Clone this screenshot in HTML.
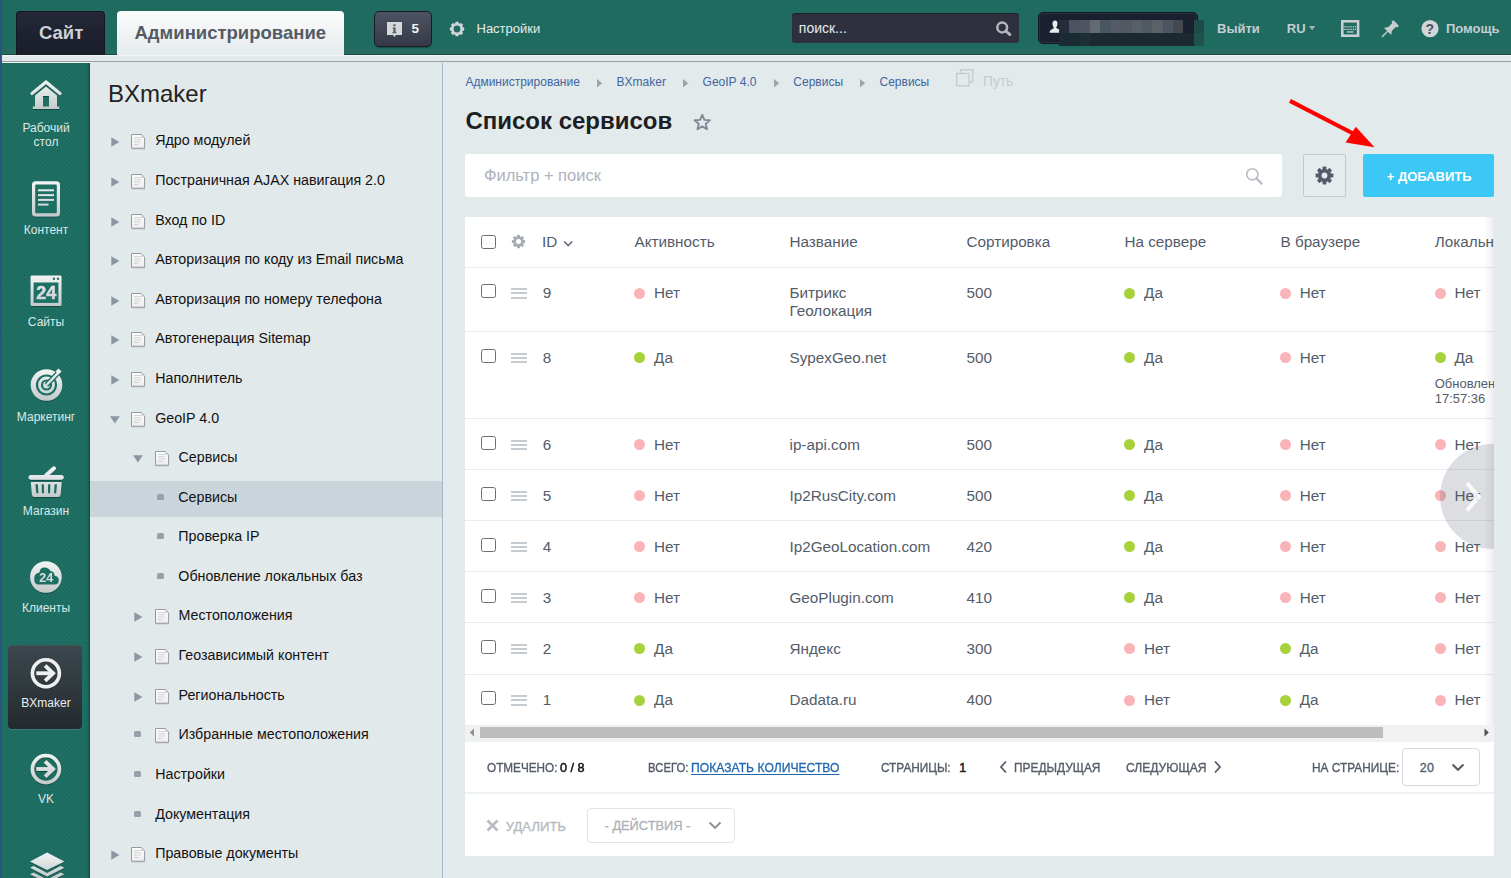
<!DOCTYPE html>
<html><head><meta charset="utf-8"><style>
*{box-sizing:border-box;margin:0;padding:0}
html,body{width:1511px;height:878px;overflow:hidden;font-family:"Liberation Sans",sans-serif;background:#e3eaec;position:relative}
.a{position:absolute}
.t{position:absolute;white-space:nowrap}
svg{position:absolute;overflow:visible}
</style></head><body>
<div class="a" style="left:0px;top:0px;width:1511px;height:55px;background:#1f6b5f"></div>
<div class="a" style="left:2px;top:49px;width:1509px;height:5px;background:#276a5f"></div>
<div class="a" style="left:2px;top:54px;width:1509px;height:1px;background:#184b43"></div>
<div class="a" style="left:16.2px;top:11px;width:88.6px;height:44px;background:linear-gradient(#232737,#1a1e2a);border-radius:4px 4px 0 0;border:1px solid #151821;border-bottom:none"></div>
<div class="t " style="left:39px;top:23.64px;font-size:18.5px;line-height:18.5px;color:#ccd1d6;font-weight:700;">Сайт</div>
<div class="a" style="left:117px;top:11px;width:227px;height:45px;background:linear-gradient(#fbfcfc,#e5eaec);border-radius:4px 4px 0 0"></div>
<div class="t " style="left:134.5px;top:23.64px;font-size:18.5px;line-height:18.5px;color:#555b65;font-weight:700;">Администрирование</div>
<div class="a" style="left:374px;top:11px;width:58px;height:36px;background:linear-gradient(#4e5364,#353947);border-radius:5px;border:1px solid #1a1c24;box-shadow:0 1px 1px rgba(0,0,0,.25)"></div>
<svg style="left:387px;top:22px" width="16" height="16" viewBox="0 0 16 16"><path d="M0 0H15V13H9L7.5 15L6 13H0Z" fill="#d5d9dc"/><rect x="6.3" y="2.3" width="2.2" height="2" fill="#5a5e66"/><path d="M5.5 5.5H8.6V10.2H9.6V11.2H5.3V10.2H6.3V6.5H5.5Z" fill="#5a5e66"/></svg>
<div class="t " style="left:411.5px;top:21.67px;font-size:13.5px;line-height:13.5px;color:#f2f4f5;font-weight:700;">5</div>
<svg style="left:449px;top:21px" width="16" height="16" viewBox="0 0 16 16"><g fill="#cfd6d8"><circle cx="8" cy="8" r="6"/><g><rect x="6.3" y="0.8" width="3.4" height="2.8" rx=".7"/><rect x="6.3" y="12.4" width="3.4" height="2.8" rx=".7"/></g><g transform="rotate(45 8 8)"><rect x="6.3" y="0.8" width="3.4" height="2.8" rx=".7"/><rect x="6.3" y="12.4" width="3.4" height="2.8" rx=".7"/></g><g transform="rotate(90 8 8)"><rect x="6.3" y="0.8" width="3.4" height="2.8" rx=".7"/><rect x="6.3" y="12.4" width="3.4" height="2.8" rx=".7"/></g><g transform="rotate(135 8 8)"><rect x="6.3" y="0.8" width="3.4" height="2.8" rx=".7"/><rect x="6.3" y="12.4" width="3.4" height="2.8" rx=".7"/></g></g><circle cx="8" cy="8" r="3.4" fill="#1f6b5f"/></svg>
<div class="t " style="left:476.5px;top:22.40px;font-size:13px;line-height:13px;color:#e6ebec;">Настройки</div>
<div class="a" style="left:792px;top:13px;width:227px;height:30px;background:#2e313d;border-radius:3px;box-shadow:inset 0 1px 1px rgba(0,0,0,.35)"></div>
<div class="t " style="left:798.8px;top:21.15px;font-size:14px;line-height:14px;color:#e9eced;">поиск...</div>
<svg style="left:994px;top:20px" width="18" height="16" viewBox="0 0 18 16"><circle cx="8.2" cy="7.5" r="4.9" fill="none" stroke="#b3b8bc" stroke-width="2.5"/><path d="M11.8 11L15.9 14.6" stroke="#b3b8bc" stroke-width="2.8" stroke-linecap="round"/></svg>
<div class="a" style="left:1038.2px;top:12.3px;width:159.5px;height:31.4px;background:#1b2030;border-radius:5px;border:1px solid #141720;box-shadow:inset 0 0 0 1px #293042"></div>
<svg style="left:1049px;top:20px" width="12" height="14" viewBox="0 0 12 14"><path d="M6 0.5C4.2 0.5 3.4 2 3.5 3.8C3.6 5.6 4.3 7 4.8 7.6C4.7 8.3 4.3 8.8 3.2 9.3C1.6 10 0.6 10.6 0.6 12.8H10.5V9.6C9.7 9.2 9 9 8.1 8.6C7.5 8.3 7.3 7.9 7.2 7.5C7.8 6.8 8.4 5.4 8.5 3.8C8.6 2 7.8 0.5 6 0.5Z" fill="#e7ebec"/></svg>
<div class="a" style="left:1059px;top:20px;width:10.3px;height:13px;background:#262c3a"></div>
<div class="a" style="left:1059px;top:33px;width:10.3px;height:13px;background:#1a2b32"></div>
<div class="a" style="left:1069px;top:20px;width:11.3px;height:13px;background:#4a535f"></div>
<div class="a" style="left:1069px;top:33px;width:11.3px;height:13px;background:#1b2b32"></div>
<div class="a" style="left:1080px;top:20px;width:10.3px;height:13px;background:#4e5460"></div>
<div class="a" style="left:1080px;top:33px;width:10.3px;height:13px;background:#1e3035"></div>
<div class="a" style="left:1090px;top:20px;width:10.3px;height:13px;background:#646a72"></div>
<div class="a" style="left:1090px;top:33px;width:10.3px;height:13px;background:#1b2a31"></div>
<div class="a" style="left:1100px;top:20px;width:11.3px;height:13px;background:#4a5562"></div>
<div class="a" style="left:1100px;top:33px;width:11.3px;height:13px;background:#1b2a31"></div>
<div class="a" style="left:1111px;top:20px;width:10.3px;height:13px;background:#555b65"></div>
<div class="a" style="left:1111px;top:33px;width:10.3px;height:13px;background:#1b2a31"></div>
<div class="a" style="left:1121px;top:20px;width:10.8px;height:13px;background:#535963"></div>
<div class="a" style="left:1121px;top:33px;width:10.8px;height:13px;background:#1b2a31"></div>
<div class="a" style="left:1131.5px;top:20px;width:10.39999999999991px;height:13px;background:#56606a"></div>
<div class="a" style="left:1131.5px;top:33px;width:10.39999999999991px;height:13px;background:#1b2a31"></div>
<div class="a" style="left:1141.6px;top:20px;width:10.900000000000137px;height:13px;background:#525862"></div>
<div class="a" style="left:1141.6px;top:33px;width:10.900000000000137px;height:13px;background:#1b2a31"></div>
<div class="a" style="left:1152.2px;top:20px;width:10.89999999999991px;height:13px;background:#5b6168"></div>
<div class="a" style="left:1152.2px;top:33px;width:10.89999999999991px;height:13px;background:#1b2a31"></div>
<div class="a" style="left:1162.8px;top:20px;width:10.3px;height:13px;background:#4c5663"></div>
<div class="a" style="left:1162.8px;top:33px;width:10.3px;height:13px;background:#1b2a31"></div>
<div class="a" style="left:1172.8px;top:20px;width:10.400000000000137px;height:13px;background:#45484f"></div>
<div class="a" style="left:1172.8px;top:33px;width:10.400000000000137px;height:13px;background:#1b2a31"></div>
<div class="a" style="left:1182.9px;top:20px;width:11.39999999999991px;height:13px;background:#1b2030"></div>
<div class="a" style="left:1182.9px;top:33px;width:11.39999999999991px;height:13px;background:#1b2a31"></div>
<div class="a" style="left:1194px;top:20px;width:10.000000000000046px;height:13px;background:#1f4a47"></div>
<div class="a" style="left:1194px;top:33px;width:10.000000000000046px;height:13px;background:#1f5249"></div>
<div class="t " style="left:1217px;top:22.40px;font-size:13px;line-height:13px;color:#c3ced1;font-weight:700;">Выйти</div>
<div class="t " style="left:1286.8px;top:22.10px;font-size:13px;line-height:13px;color:#c3ced1;font-weight:700;">RU</div>
<svg style="left:1309px;top:26px" width="7" height="5" viewBox="0 0 7 5"><path d="M0 0H6.2L3.1 4.3Z" fill="#a9b4b8"/></svg>
<svg style="left:1341px;top:20px" width="19" height="18" viewBox="0 0 19 18"><rect x="1.3" y="1.3" width="15.8" height="14.4" fill="none" stroke="#c8ced1" stroke-width="2.6"/><g fill="#c8ced1"><rect x="3.2" y="6.2" width="1.4" height="1.2"/><rect x="5.3" y="6.2" width="1.4" height="1.2"/><rect x="7.4" y="6.2" width="1.4" height="1.2"/><rect x="9.5" y="6.2" width="1.4" height="1.2"/><rect x="11.6" y="6.2" width="1.4" height="1.2"/><rect x="13.7" y="6.2" width="1.4" height="1.2"/><rect x="3.2" y="8.8" width="1.4" height="1.2"/><rect x="5.3" y="8.8" width="1.4" height="1.2"/><rect x="7.4" y="8.8" width="1.4" height="1.2"/><rect x="9.5" y="8.8" width="1.4" height="1.2"/><rect x="11.6" y="8.8" width="1.4" height="1.2"/><rect x="13.7" y="8.8" width="1.4" height="1.2"/><rect x="6" y="11.3" width="6.5" height="1.3"/></g></svg>
<svg style="left:1378.7px;top:19.8px" width="20" height="20" viewBox="0 0 20 20"><g transform="rotate(45 10 10)" fill="#c8ced1"><rect x="5.8" y="0" width="8.4" height="2.8" rx="1.2"/><rect x="7.4" y="2.4" width="5.2" height="6.6"/><path d="M7.4 8.6H12.6L15.2 12H4.8Z"/><rect x="9.35" y="11.5" width="1.3" height="8.5"/></g></svg>
<svg style="left:1421px;top:20px" width="18" height="18" viewBox="0 0 18 18"><circle cx="9" cy="8.6" r="8.6" fill="#d0d6d8"/></svg>
<div class="t " style="left:1425.6px;top:21.55px;font-size:14px;line-height:14px;color:#4b505a;font-weight:700;">?</div>
<div class="t " style="left:1446px;top:22.40px;font-size:13px;line-height:13px;color:#c3ced1;font-weight:700;">Помощь</div>
<div class="a" style="left:2px;top:55px;width:1509px;height:8px;background:#e2e9eb"></div>
<div class="a" style="left:2px;top:55px;width:1509px;height:1px;background:#f3f6f7"></div>
<div class="a" style="left:2px;top:61px;width:1509px;height:1px;background:#9a9fa2"></div>
<div class="a" style="left:2px;top:62px;width:88px;height:1px;background:#f2f5f6"></div>
<div class="a" style="left:0px;top:0px;width:2px;height:878px;background:#2b5480"></div>
<div class="a" style="left:2px;top:63px;width:88px;height:815px;background:#1f7064"></div>
<div class="a" style="left:2px;top:63px;width:88px;height:815px;background-image:radial-gradient(circle at 1.1px 1.1px,rgba(0,40,30,.13) 0.7px,transparent 1.1px),radial-gradient(circle at 3.3px 3.3px,rgba(0,40,30,.13) 0.7px,transparent 1.1px);background-size:4.4px 4.4px"></div>
<div class="a" style="left:86px;top:63px;width:3px;height:815px;background:linear-gradient(90deg,rgba(0,0,0,0),rgba(0,0,0,.15))"></div>
<div class="a" style="left:89px;top:63px;width:1px;height:815px;background:#0f5046"></div>
<svg style="left:0;top:0" width="90" height="878" viewBox="0 0 90 878"><defs><linearGradient id="gh" gradientUnits="userSpaceOnUse" x1="0" y1="80" x2="0" y2="110"><stop offset="0" stop-color="#f3f5f5"/><stop offset="1" stop-color="#c3c9ca"/></linearGradient></defs><defs><linearGradient id="gc" gradientUnits="userSpaceOnUse" x1="0" y1="181" x2="0" y2="217"><stop offset="0" stop-color="#f3f5f5"/><stop offset="1" stop-color="#c3c9ca"/></linearGradient></defs><defs><linearGradient id="gs" gradientUnits="userSpaceOnUse" x1="0" y1="275" x2="0" y2="306"><stop offset="0" stop-color="#f3f5f5"/><stop offset="1" stop-color="#c3c9ca"/></linearGradient></defs><defs><linearGradient id="gt" gradientUnits="userSpaceOnUse" x1="0" y1="369" x2="0" y2="401"><stop offset="0" stop-color="#f3f5f5"/><stop offset="1" stop-color="#c3c9ca"/></linearGradient></defs><defs><linearGradient id="gb" gradientUnits="userSpaceOnUse" x1="0" y1="467" x2="0" y2="498"><stop offset="0" stop-color="#f3f5f5"/><stop offset="1" stop-color="#c3c9ca"/></linearGradient></defs><defs><linearGradient id="gk" gradientUnits="userSpaceOnUse" x1="0" y1="561" x2="0" y2="593"><stop offset="0" stop-color="#f3f5f5"/><stop offset="1" stop-color="#c3c9ca"/></linearGradient></defs><defs><linearGradient id="gv" gradientUnits="userSpaceOnUse" x1="0" y1="753" x2="0" y2="785"><stop offset="0" stop-color="#f3f5f5"/><stop offset="1" stop-color="#c3c9ca"/></linearGradient></defs><defs><linearGradient id="gl" gradientUnits="userSpaceOnUse" x1="0" y1="852" x2="0" y2="878"><stop offset="0" stop-color="#f3f5f5"/><stop offset="1" stop-color="#c3c9ca"/></linearGradient></defs><defs><filter id="sh" x="-20%" y="-20%" width="140%" height="140%"><feDropShadow dx="0" dy="1" stdDeviation="0.6" flood-color="#000" flood-opacity="0.35"/></filter></defs><g filter="url(#sh)"><path d="M32 93.5L46 82L60 93.5" fill="none" stroke="url(#gh)" stroke-width="3.2" stroke-linecap="round" stroke-linejoin="round"/><path d="M35 95.5L46 86.5L57 95.5V106.5H59.2V109H32.8V106.5H35Z M43 96V106.5H49V96Z" fill="url(#gh)" fill-rule="evenodd"/></g><g filter="url(#sh)"><rect x="32" y="181.2" width="28" height="35.3" rx="3.5" fill="url(#gc)"/><rect x="35.2" y="184.4" width="21.6" height="28.9" rx="1" fill="#1e6f63"/><g fill="url(#gc)"><rect x="38" y="189.3" width="16" height="2"/><rect x="38" y="194.1" width="16" height="2"/><rect x="38" y="198.9" width="16" height="2"/><rect x="38" y="203.6" width="10.5" height="2"/></g></g><g filter="url(#sh)"><rect x="30.6" y="275.5" width="30.9" height="30.5" rx="1.3" fill="url(#gs)"/><rect x="33.6" y="282.5" width="24.8" height="20.4" fill="#1e6f63"/><circle cx="53.9" cy="278.8" r="1.2" fill="#2f6a61"/><circle cx="58" cy="278.8" r="1.2" fill="#2f6a61"/><text x="46.2" y="299.4" text-anchor="middle" font-family="Liberation Sans" font-weight="700" font-size="18" fill="url(#gs)" stroke="url(#gs)" stroke-width="0.5">24</text></g><g filter="url(#sh)"><circle cx="46.5" cy="385" r="15.8" fill="url(#gt)"/><circle cx="46.5" cy="385" r="10.6" fill="#1e6f63"/><circle cx="46.5" cy="385" r="8.4" fill="url(#gt)"/><circle cx="46.5" cy="385" r="5.6" fill="#1e6f63"/><circle cx="46.5" cy="385" r="3.4" fill="url(#gt)"/><path d="M46.5 385L58.5 372.5" stroke="#1e6f63" stroke-width="5"/><path d="M46.5 385L59 372" stroke="url(#gt)" stroke-width="2.4"/><path d="M55.5 371.5L58.5 368.5L61.5 371.5L58.5 374.5Z" fill="url(#gt)"/></g><g filter="url(#sh)"><path d="M46 475.5L54 468.3" stroke="url(#gb)" stroke-width="4" stroke-linecap="round"/><rect x="28.5" y="474.9" width="35.3" height="4.8" rx="2.4" fill="url(#gb)"/><path d="M30.8 482H61.7L60.6 494.5Q60.3 497 57.8 497H34.7Q32.2 497 31.9 494.5Z M35.3 484.3L36.3 493.3H38.5L37.9 484.3Z M41.6 484.3L41.9 493.3H44.1L43.9 484.3Z M48.1 484.3L47.9 493.3H50.1L50.4 484.3Z M54.6 484.3L54 493.3H56.2L57 484.3Z" fill="url(#gb)" fill-rule="evenodd"/></g><g filter="url(#sh)"><circle cx="45.9" cy="577" r="15.8" fill="url(#gk)"/><path d="M37.8 584.4H54.8Q58.8 584.4 58.8 580.2Q58.8 576.2 54.6 575.8Q54.6 571.4 50.4 571Q48.6 567.4 44.6 567.4Q39.8 567.4 39.4 572.6Q34.2 573.6 34.2 578.8Q34.2 584.4 37.8 584.4Z" fill="#1e6f63"/><text x="46.3" y="581.6" text-anchor="middle" font-family="Liberation Sans" font-weight="700" font-size="12.6" fill="url(#gk)">24</text></g></svg>
<div class="a" style="left:8px;top:645px;width:74px;height:84px;background:linear-gradient(#3c484e,#242a2f);border-radius:4px;box-shadow:0 1px 0 rgba(255,255,255,.12), inset 0 1px 0 rgba(255,255,255,.06)"></div>
<svg style="left:0;top:0" width="90" height="878" viewBox="0 0 90 878"><defs><linearGradient id="gv2" gradientUnits="userSpaceOnUse" x1="0" y1="753" x2="0" y2="785"><stop offset="0" stop-color="#f3f5f5"/><stop offset="1" stop-color="#c3c9ca"/></linearGradient></defs><defs><linearGradient id="gl2" gradientUnits="userSpaceOnUse" x1="0" y1="852" x2="0" y2="878"><stop offset="0" stop-color="#f3f5f5"/><stop offset="1" stop-color="#c3c9ca"/></linearGradient></defs><defs><filter id="sh2" x="-20%" y="-20%" width="140%" height="140%"><feDropShadow dx="0" dy="1" stdDeviation="0.6" flood-color="#000" flood-opacity="0.35"/></filter></defs><g filter="url(#sh2)"><circle cx="45.9" cy="673.2" r="13.5" fill="none" stroke="#eef0f0" stroke-width="3.6"/><path d="M36.3 673.2H51.9" stroke="#eef0f0" stroke-width="3.8"/><path d="M45.1 665.6L53.1 673.2L45.1 680.8000000000001" fill="none" stroke="#eef0f0" stroke-width="3.8" stroke-linejoin="miter"/></g><g filter="url(#sh2)"><circle cx="45.9" cy="769" r="13.5" fill="none" stroke="url(#gv2)" stroke-width="3.6"/><path d="M36.3 769H51.9" stroke="url(#gv2)" stroke-width="3.8"/><path d="M45.1 761.4L53.1 769L45.1 776.6" fill="none" stroke="url(#gv2)" stroke-width="3.8" stroke-linejoin="miter"/></g><g filter="url(#sh2)" fill="url(#gl2)"><path d="M30 861.4L47.1 852.4L64.3 861.4L47.1 870Z"/><path d="M30 867.8L33.6 866L47.1 873L60.6 866L64.3 867.8L47.1 876.4Z"/><path d="M30 874.2L33.6 872.4L47.1 879.4L60.6 872.4L64.3 874.2L47.1 882.8Z"/></g></svg>
<div class="t" style="left:2px;width:88px;text-align:center;top:121.84px;font-size:12px;line-height:12px;color:#dde8e7">Рабочий</div>
<div class="t" style="left:2px;width:88px;text-align:center;top:135.64px;font-size:12px;line-height:12px;color:#dde8e7">стол</div>
<div class="t" style="left:2px;width:88px;text-align:center;top:224.34px;font-size:12px;line-height:12px;color:#dde8e7">Контент</div>
<div class="t" style="left:2px;width:88px;text-align:center;top:315.64px;font-size:12px;line-height:12px;color:#dde8e7">Сайты</div>
<div class="t" style="left:2px;width:88px;text-align:center;top:410.54px;font-size:12px;line-height:12px;color:#dde8e7">Маркетинг</div>
<div class="t" style="left:2px;width:88px;text-align:center;top:505.44px;font-size:12px;line-height:12px;color:#dde8e7">Магазин</div>
<div class="t" style="left:2px;width:88px;text-align:center;top:601.54px;font-size:12px;line-height:12px;color:#dde8e7">Клиенты</div>
<div class="t" style="left:2px;width:88px;text-align:center;top:696.84px;font-size:12px;line-height:12px;color:#e8eef0">BXmaker</div>
<div class="t" style="left:2px;width:88px;text-align:center;top:793.24px;font-size:12px;line-height:12px;color:#dde8e7">VK</div>
<div class="a" style="left:90px;top:63px;width:352px;height:815px;background:#e2e9eb"></div>
<div class="a" style="left:442px;top:63px;width:1px;height:815px;background:#a3b5c6"></div>
<div class="t " style="left:108px;top:81.98px;font-size:24px;line-height:24px;color:#222;">BXmaker</div>
<div class="a" style="left:90px;top:481px;width:352px;height:36px;background:#cad5db"></div>
<svg style="left:110.8px;top:137.0px" width="9" height="10" viewBox="0 0 9 10"><path d="M0.3 0.3L8.4 5L0.3 9.7Z" fill="#8b96a3"/></svg>
<svg style="left:130.9px;top:134.1px" width="16" height="17" viewBox="0 0 16 17"><defs><linearGradient id="pgf" x1="0" y1="0" x2="0" y2="1"><stop offset="0" stop-color="#fdfdfd"/><stop offset="1" stop-color="#eeeeee"/></linearGradient></defs><rect x="0.6" y="14" width="13.2" height="1.4" fill="rgba(0,0,0,.16)"/><path d="M0.5 0.5H10.2L13.6 3.9V14.2H0.5Z" fill="url(#pgf)" stroke="#979a9d" stroke-width="1"/><path d="M10.2 0.9V3.9H13.3Z" fill="#d0d2d4"/><g fill="#c9cbcd"><rect x="3" y="3.2" width="6.8" height="0.8"/><rect x="3" y="5.4" width="7" height="0.8"/><rect x="3" y="7.6" width="7" height="0.8"/><rect x="3" y="10.2" width="4.5" height="0.8"/></g></svg>
<div class="t " style="left:155.2px;top:132.94px;font-size:14.25px;line-height:14.25px;color:#121212;">Ядро модулей</div>
<svg style="left:110.8px;top:177.0px" width="9" height="10" viewBox="0 0 9 10"><path d="M0.3 0.3L8.4 5L0.3 9.7Z" fill="#8b96a3"/></svg>
<svg style="left:130.9px;top:174.1px" width="16" height="17" viewBox="0 0 16 17"><defs><linearGradient id="pgf" x1="0" y1="0" x2="0" y2="1"><stop offset="0" stop-color="#fdfdfd"/><stop offset="1" stop-color="#eeeeee"/></linearGradient></defs><rect x="0.6" y="14" width="13.2" height="1.4" fill="rgba(0,0,0,.16)"/><path d="M0.5 0.5H10.2L13.6 3.9V14.2H0.5Z" fill="url(#pgf)" stroke="#979a9d" stroke-width="1"/><path d="M10.2 0.9V3.9H13.3Z" fill="#d0d2d4"/><g fill="#c9cbcd"><rect x="3" y="3.2" width="6.8" height="0.8"/><rect x="3" y="5.4" width="7" height="0.8"/><rect x="3" y="7.6" width="7" height="0.8"/><rect x="3" y="10.2" width="4.5" height="0.8"/></g></svg>
<div class="t " style="left:155.2px;top:172.94px;font-size:14.25px;line-height:14.25px;color:#121212;">Постраничная AJAX навигация 2.0</div>
<svg style="left:110.8px;top:217.0px" width="9" height="10" viewBox="0 0 9 10"><path d="M0.3 0.3L8.4 5L0.3 9.7Z" fill="#8b96a3"/></svg>
<svg style="left:130.9px;top:214.1px" width="16" height="17" viewBox="0 0 16 17"><defs><linearGradient id="pgf" x1="0" y1="0" x2="0" y2="1"><stop offset="0" stop-color="#fdfdfd"/><stop offset="1" stop-color="#eeeeee"/></linearGradient></defs><rect x="0.6" y="14" width="13.2" height="1.4" fill="rgba(0,0,0,.16)"/><path d="M0.5 0.5H10.2L13.6 3.9V14.2H0.5Z" fill="url(#pgf)" stroke="#979a9d" stroke-width="1"/><path d="M10.2 0.9V3.9H13.3Z" fill="#d0d2d4"/><g fill="#c9cbcd"><rect x="3" y="3.2" width="6.8" height="0.8"/><rect x="3" y="5.4" width="7" height="0.8"/><rect x="3" y="7.6" width="7" height="0.8"/><rect x="3" y="10.2" width="4.5" height="0.8"/></g></svg>
<div class="t " style="left:155.2px;top:212.94px;font-size:14.25px;line-height:14.25px;color:#121212;">Вход по ID</div>
<svg style="left:110.8px;top:256.0px" width="9" height="10" viewBox="0 0 9 10"><path d="M0.3 0.3L8.4 5L0.3 9.7Z" fill="#8b96a3"/></svg>
<svg style="left:130.9px;top:253.1px" width="16" height="17" viewBox="0 0 16 17"><defs><linearGradient id="pgf" x1="0" y1="0" x2="0" y2="1"><stop offset="0" stop-color="#fdfdfd"/><stop offset="1" stop-color="#eeeeee"/></linearGradient></defs><rect x="0.6" y="14" width="13.2" height="1.4" fill="rgba(0,0,0,.16)"/><path d="M0.5 0.5H10.2L13.6 3.9V14.2H0.5Z" fill="url(#pgf)" stroke="#979a9d" stroke-width="1"/><path d="M10.2 0.9V3.9H13.3Z" fill="#d0d2d4"/><g fill="#c9cbcd"><rect x="3" y="3.2" width="6.8" height="0.8"/><rect x="3" y="5.4" width="7" height="0.8"/><rect x="3" y="7.6" width="7" height="0.8"/><rect x="3" y="10.2" width="4.5" height="0.8"/></g></svg>
<div class="t " style="left:155.2px;top:251.94px;font-size:14.25px;line-height:14.25px;color:#121212;">Авторизация по коду из Email письма</div>
<svg style="left:110.8px;top:296.0px" width="9" height="10" viewBox="0 0 9 10"><path d="M0.3 0.3L8.4 5L0.3 9.7Z" fill="#8b96a3"/></svg>
<svg style="left:130.9px;top:293.1px" width="16" height="17" viewBox="0 0 16 17"><defs><linearGradient id="pgf" x1="0" y1="0" x2="0" y2="1"><stop offset="0" stop-color="#fdfdfd"/><stop offset="1" stop-color="#eeeeee"/></linearGradient></defs><rect x="0.6" y="14" width="13.2" height="1.4" fill="rgba(0,0,0,.16)"/><path d="M0.5 0.5H10.2L13.6 3.9V14.2H0.5Z" fill="url(#pgf)" stroke="#979a9d" stroke-width="1"/><path d="M10.2 0.9V3.9H13.3Z" fill="#d0d2d4"/><g fill="#c9cbcd"><rect x="3" y="3.2" width="6.8" height="0.8"/><rect x="3" y="5.4" width="7" height="0.8"/><rect x="3" y="7.6" width="7" height="0.8"/><rect x="3" y="10.2" width="4.5" height="0.8"/></g></svg>
<div class="t " style="left:155.2px;top:291.94px;font-size:14.25px;line-height:14.25px;color:#121212;">Авторизация по номеру телефона</div>
<svg style="left:110.8px;top:335.0px" width="9" height="10" viewBox="0 0 9 10"><path d="M0.3 0.3L8.4 5L0.3 9.7Z" fill="#8b96a3"/></svg>
<svg style="left:130.9px;top:332.1px" width="16" height="17" viewBox="0 0 16 17"><defs><linearGradient id="pgf" x1="0" y1="0" x2="0" y2="1"><stop offset="0" stop-color="#fdfdfd"/><stop offset="1" stop-color="#eeeeee"/></linearGradient></defs><rect x="0.6" y="14" width="13.2" height="1.4" fill="rgba(0,0,0,.16)"/><path d="M0.5 0.5H10.2L13.6 3.9V14.2H0.5Z" fill="url(#pgf)" stroke="#979a9d" stroke-width="1"/><path d="M10.2 0.9V3.9H13.3Z" fill="#d0d2d4"/><g fill="#c9cbcd"><rect x="3" y="3.2" width="6.8" height="0.8"/><rect x="3" y="5.4" width="7" height="0.8"/><rect x="3" y="7.6" width="7" height="0.8"/><rect x="3" y="10.2" width="4.5" height="0.8"/></g></svg>
<div class="t " style="left:155.2px;top:330.94px;font-size:14.25px;line-height:14.25px;color:#121212;">Автогенерация Sitemap</div>
<svg style="left:110.8px;top:375.0px" width="9" height="10" viewBox="0 0 9 10"><path d="M0.3 0.3L8.4 5L0.3 9.7Z" fill="#8b96a3"/></svg>
<svg style="left:130.9px;top:372.1px" width="16" height="17" viewBox="0 0 16 17"><defs><linearGradient id="pgf" x1="0" y1="0" x2="0" y2="1"><stop offset="0" stop-color="#fdfdfd"/><stop offset="1" stop-color="#eeeeee"/></linearGradient></defs><rect x="0.6" y="14" width="13.2" height="1.4" fill="rgba(0,0,0,.16)"/><path d="M0.5 0.5H10.2L13.6 3.9V14.2H0.5Z" fill="url(#pgf)" stroke="#979a9d" stroke-width="1"/><path d="M10.2 0.9V3.9H13.3Z" fill="#d0d2d4"/><g fill="#c9cbcd"><rect x="3" y="3.2" width="6.8" height="0.8"/><rect x="3" y="5.4" width="7" height="0.8"/><rect x="3" y="7.6" width="7" height="0.8"/><rect x="3" y="10.2" width="4.5" height="0.8"/></g></svg>
<div class="t " style="left:155.2px;top:370.94px;font-size:14.25px;line-height:14.25px;color:#121212;">Наполнитель</div>
<svg style="left:109.7px;top:415.7px" width="10" height="8" viewBox="0 0 10 8"><path d="M0 0.2H9.8L4.9 7.4Z" fill="#8b96a3"/></svg>
<svg style="left:130.9px;top:412.1px" width="16" height="17" viewBox="0 0 16 17"><defs><linearGradient id="pgf" x1="0" y1="0" x2="0" y2="1"><stop offset="0" stop-color="#fdfdfd"/><stop offset="1" stop-color="#eeeeee"/></linearGradient></defs><rect x="0.6" y="14" width="13.2" height="1.4" fill="rgba(0,0,0,.16)"/><path d="M0.5 0.5H10.2L13.6 3.9V14.2H0.5Z" fill="url(#pgf)" stroke="#979a9d" stroke-width="1"/><path d="M10.2 0.9V3.9H13.3Z" fill="#d0d2d4"/><g fill="#c9cbcd"><rect x="3" y="3.2" width="6.8" height="0.8"/><rect x="3" y="5.4" width="7" height="0.8"/><rect x="3" y="7.6" width="7" height="0.8"/><rect x="3" y="10.2" width="4.5" height="0.8"/></g></svg>
<div class="t " style="left:155.2px;top:410.94px;font-size:14.25px;line-height:14.25px;color:#121212;">GeoIP 4.0</div>
<svg style="left:133.0px;top:454.7px" width="10" height="8" viewBox="0 0 10 8"><path d="M0 0.2H9.8L4.9 7.4Z" fill="#8b96a3"/></svg>
<svg style="left:154.899px;top:451.1px" width="16" height="17" viewBox="0 0 16 17"><defs><linearGradient id="pgf" x1="0" y1="0" x2="0" y2="1"><stop offset="0" stop-color="#fdfdfd"/><stop offset="1" stop-color="#eeeeee"/></linearGradient></defs><rect x="0.6" y="14" width="13.2" height="1.4" fill="rgba(0,0,0,.16)"/><path d="M0.5 0.5H10.2L13.6 3.9V14.2H0.5Z" fill="url(#pgf)" stroke="#979a9d" stroke-width="1"/><path d="M10.2 0.9V3.9H13.3Z" fill="#d0d2d4"/><g fill="#c9cbcd"><rect x="3" y="3.2" width="6.8" height="0.8"/><rect x="3" y="5.4" width="7" height="0.8"/><rect x="3" y="7.6" width="7" height="0.8"/><rect x="3" y="10.2" width="4.5" height="0.8"/></g></svg>
<div class="t " style="left:178.5px;top:449.94px;font-size:14.25px;line-height:14.25px;color:#121212;">Сервисы</div>
<div class="a" style="left:157px;top:493.8px;width:6.5px;height:6.5px;background:#97a1ab;border-radius:1.6px"></div>
<div class="t " style="left:178.3px;top:489.94px;font-size:14.25px;line-height:14.25px;color:#121212;">Сервисы</div>
<div class="a" style="left:157px;top:532.8px;width:6.5px;height:6.5px;background:#97a1ab;border-radius:1.6px"></div>
<div class="t " style="left:178.3px;top:528.94px;font-size:14.25px;line-height:14.25px;color:#121212;">Проверка IP</div>
<div class="a" style="left:157px;top:572.8px;width:6.5px;height:6.5px;background:#97a1ab;border-radius:1.6px"></div>
<div class="t " style="left:178.3px;top:568.94px;font-size:14.25px;line-height:14.25px;color:#121212;">Обновление локальных баз</div>
<svg style="left:134.1px;top:612.0px" width="9" height="10" viewBox="0 0 9 10"><path d="M0.3 0.3L8.4 5L0.3 9.7Z" fill="#8b96a3"/></svg>
<svg style="left:154.899px;top:609.1px" width="16" height="17" viewBox="0 0 16 17"><defs><linearGradient id="pgf" x1="0" y1="0" x2="0" y2="1"><stop offset="0" stop-color="#fdfdfd"/><stop offset="1" stop-color="#eeeeee"/></linearGradient></defs><rect x="0.6" y="14" width="13.2" height="1.4" fill="rgba(0,0,0,.16)"/><path d="M0.5 0.5H10.2L13.6 3.9V14.2H0.5Z" fill="url(#pgf)" stroke="#979a9d" stroke-width="1"/><path d="M10.2 0.9V3.9H13.3Z" fill="#d0d2d4"/><g fill="#c9cbcd"><rect x="3" y="3.2" width="6.8" height="0.8"/><rect x="3" y="5.4" width="7" height="0.8"/><rect x="3" y="7.6" width="7" height="0.8"/><rect x="3" y="10.2" width="4.5" height="0.8"/></g></svg>
<div class="t " style="left:178.5px;top:607.94px;font-size:14.25px;line-height:14.25px;color:#121212;">Местоположения</div>
<svg style="left:134.1px;top:652.0px" width="9" height="10" viewBox="0 0 9 10"><path d="M0.3 0.3L8.4 5L0.3 9.7Z" fill="#8b96a3"/></svg>
<svg style="left:154.899px;top:649.1px" width="16" height="17" viewBox="0 0 16 17"><defs><linearGradient id="pgf" x1="0" y1="0" x2="0" y2="1"><stop offset="0" stop-color="#fdfdfd"/><stop offset="1" stop-color="#eeeeee"/></linearGradient></defs><rect x="0.6" y="14" width="13.2" height="1.4" fill="rgba(0,0,0,.16)"/><path d="M0.5 0.5H10.2L13.6 3.9V14.2H0.5Z" fill="url(#pgf)" stroke="#979a9d" stroke-width="1"/><path d="M10.2 0.9V3.9H13.3Z" fill="#d0d2d4"/><g fill="#c9cbcd"><rect x="3" y="3.2" width="6.8" height="0.8"/><rect x="3" y="5.4" width="7" height="0.8"/><rect x="3" y="7.6" width="7" height="0.8"/><rect x="3" y="10.2" width="4.5" height="0.8"/></g></svg>
<div class="t " style="left:178.5px;top:647.94px;font-size:14.25px;line-height:14.25px;color:#121212;">Геозависимый контент</div>
<svg style="left:134.1px;top:692.0px" width="9" height="10" viewBox="0 0 9 10"><path d="M0.3 0.3L8.4 5L0.3 9.7Z" fill="#8b96a3"/></svg>
<svg style="left:154.899px;top:689.1px" width="16" height="17" viewBox="0 0 16 17"><defs><linearGradient id="pgf" x1="0" y1="0" x2="0" y2="1"><stop offset="0" stop-color="#fdfdfd"/><stop offset="1" stop-color="#eeeeee"/></linearGradient></defs><rect x="0.6" y="14" width="13.2" height="1.4" fill="rgba(0,0,0,.16)"/><path d="M0.5 0.5H10.2L13.6 3.9V14.2H0.5Z" fill="url(#pgf)" stroke="#979a9d" stroke-width="1"/><path d="M10.2 0.9V3.9H13.3Z" fill="#d0d2d4"/><g fill="#c9cbcd"><rect x="3" y="3.2" width="6.8" height="0.8"/><rect x="3" y="5.4" width="7" height="0.8"/><rect x="3" y="7.6" width="7" height="0.8"/><rect x="3" y="10.2" width="4.5" height="0.8"/></g></svg>
<div class="t " style="left:178.5px;top:687.94px;font-size:14.25px;line-height:14.25px;color:#121212;">Региональность</div>
<div class="a" style="left:134.2px;top:730.8px;width:6.5px;height:6.5px;background:#97a1ab;border-radius:1.6px"></div>
<svg style="left:154.899px;top:728.1px" width="16" height="17" viewBox="0 0 16 17"><defs><linearGradient id="pgf" x1="0" y1="0" x2="0" y2="1"><stop offset="0" stop-color="#fdfdfd"/><stop offset="1" stop-color="#eeeeee"/></linearGradient></defs><rect x="0.6" y="14" width="13.2" height="1.4" fill="rgba(0,0,0,.16)"/><path d="M0.5 0.5H10.2L13.6 3.9V14.2H0.5Z" fill="url(#pgf)" stroke="#979a9d" stroke-width="1"/><path d="M10.2 0.9V3.9H13.3Z" fill="#d0d2d4"/><g fill="#c9cbcd"><rect x="3" y="3.2" width="6.8" height="0.8"/><rect x="3" y="5.4" width="7" height="0.8"/><rect x="3" y="7.6" width="7" height="0.8"/><rect x="3" y="10.2" width="4.5" height="0.8"/></g></svg>
<div class="t " style="left:178.5px;top:726.94px;font-size:14.25px;line-height:14.25px;color:#121212;">Избранные местоположения</div>
<div class="a" style="left:134.2px;top:770.8px;width:6.5px;height:6.5px;background:#97a1ab;border-radius:1.6px"></div>
<div class="t " style="left:155.2px;top:766.94px;font-size:14.25px;line-height:14.25px;color:#121212;">Настройки</div>
<div class="a" style="left:134.2px;top:810.8px;width:6.5px;height:6.5px;background:#97a1ab;border-radius:1.6px"></div>
<div class="t " style="left:155.2px;top:806.94px;font-size:14.25px;line-height:14.25px;color:#121212;">Документация</div>
<svg style="left:110.8px;top:850.0px" width="9" height="10" viewBox="0 0 9 10"><path d="M0.3 0.3L8.4 5L0.3 9.7Z" fill="#8b96a3"/></svg>
<svg style="left:130.9px;top:847.1px" width="16" height="17" viewBox="0 0 16 17"><defs><linearGradient id="pgf" x1="0" y1="0" x2="0" y2="1"><stop offset="0" stop-color="#fdfdfd"/><stop offset="1" stop-color="#eeeeee"/></linearGradient></defs><rect x="0.6" y="14" width="13.2" height="1.4" fill="rgba(0,0,0,.16)"/><path d="M0.5 0.5H10.2L13.6 3.9V14.2H0.5Z" fill="url(#pgf)" stroke="#979a9d" stroke-width="1"/><path d="M10.2 0.9V3.9H13.3Z" fill="#d0d2d4"/><g fill="#c9cbcd"><rect x="3" y="3.2" width="6.8" height="0.8"/><rect x="3" y="5.4" width="7" height="0.8"/><rect x="3" y="7.6" width="7" height="0.8"/><rect x="3" y="10.2" width="4.5" height="0.8"/></g></svg>
<div class="t " style="left:155.2px;top:845.94px;font-size:14.25px;line-height:14.25px;color:#121212;">Правовые документы</div>
<div class="t " style="left:465.4px;top:76.04px;font-size:12px;line-height:12px;color:#3f66a0;">Администрирование</div>
<div class="t " style="left:616.6px;top:76.04px;font-size:12px;line-height:12px;color:#3f66a0;">BXmaker</div>
<div class="t " style="left:702.6px;top:76.04px;font-size:12px;line-height:12px;color:#3f66a0;">GeoIP 4.0</div>
<div class="t " style="left:793.3px;top:76.04px;font-size:12px;line-height:12px;color:#3f66a0;">Сервисы</div>
<div class="t " style="left:879.5px;top:76.04px;font-size:12px;line-height:12px;color:#3f66a0;">Сервисы</div>
<svg style="left:596.5px;top:78.5px" width="6" height="9" viewBox="0 0 6 9"><path d="M0 0L5.2 4.3L0 8.6Z" fill="#9ca3a9"/></svg>
<svg style="left:683px;top:78.5px" width="6" height="9" viewBox="0 0 6 9"><path d="M0 0L5.2 4.3L0 8.6Z" fill="#9ca3a9"/></svg>
<svg style="left:773.5px;top:78.5px" width="6" height="9" viewBox="0 0 6 9"><path d="M0 0L5.2 4.3L0 8.6Z" fill="#9ca3a9"/></svg>
<svg style="left:859.6px;top:78.5px" width="6" height="9" viewBox="0 0 6 9"><path d="M0 0L5.2 4.3L0 8.6Z" fill="#9ca3a9"/></svg>
<svg style="left:955.5px;top:69px" width="18" height="18" viewBox="0 0 18 18"><path d="M4.5 4.5V0.7H16.8V13H13" fill="none" stroke="#c5ccd1" stroke-width="1.4"/><rect x="0.7" y="4.5" width="12.3" height="12.3" fill="none" stroke="#c5ccd1" stroke-width="1.4"/></svg>
<div class="t " style="left:983px;top:74.56px;font-size:13.75px;line-height:13.75px;color:#c5ccd1;">Путь</div>
<div class="t " style="left:465.4px;top:109.48px;font-size:24px;line-height:24px;color:#1d1f22;font-weight:700;">Список сервисов</div>
<svg style="left:692.5px;top:112.5px" width="19" height="19" viewBox="0 0 19 19"><path d="M9.25 1.8L11.4 6.9L16.9 7.3L12.7 10.9L14 16.3L9.25 13.4L4.5 16.3L5.8 10.9L1.6 7.3L7.1 6.9Z" fill="none" stroke="#7f8893" stroke-width="1.9" stroke-linejoin="round"/></svg>
<div class="a" style="left:465px;top:154px;width:817px;height:43px;background:#fff;border-radius:3px"></div>
<div class="t " style="left:483.9px;top:167.03px;font-size:16.5px;line-height:16.5px;color:#aeb3ba;">Фильтр + поиск</div>
<svg style="left:1245px;top:167px" width="19" height="19" viewBox="0 0 19 19"><circle cx="7.3" cy="7.3" r="5.6" fill="none" stroke="#b9bec3" stroke-width="1.6"/><path d="M11.4 11.4L16.6 16.6" stroke="#b9bec3" stroke-width="2.2" stroke-linecap="round"/></svg>
<div class="a" style="left:1303px;top:154px;width:43px;height:43px;border:1px solid #c3cacf;border-radius:2px;background:#e6ecee"></div>
<svg style="left:1314.3px;top:164.6px" width="21" height="21" viewBox="0 0 21 21"><g fill="#535c69"><circle cx="10.5" cy="10.5" r="6.6"/><g><rect x="8.6" y="1.6" width="3.8" height="4" rx=".7"/><rect x="8.6" y="15.4" width="3.8" height="4" rx=".7"/></g><g transform="rotate(45 10.5 10.5)"><rect x="8.6" y="1.6" width="3.8" height="4" rx=".7"/><rect x="8.6" y="15.4" width="3.8" height="4" rx=".7"/></g><g transform="rotate(90 10.5 10.5)"><rect x="8.6" y="1.6" width="3.8" height="4" rx=".7"/><rect x="8.6" y="15.4" width="3.8" height="4" rx=".7"/></g><g transform="rotate(135 10.5 10.5)"><rect x="8.6" y="1.6" width="3.8" height="4" rx=".7"/><rect x="8.6" y="15.4" width="3.8" height="4" rx=".7"/></g></g><circle cx="10.5" cy="10.5" r="2.9" fill="#e6ecee"/></svg>
<div class="a" style="left:1363px;top:154px;width:131px;height:43px;background:#3bc8f5;border-radius:2px"></div>
<div class="t " style="left:1386.7px;top:169.90px;font-size:13px;line-height:13px;color:#fff;font-weight:700;">+ ДОБАВИТЬ</div>
<svg style="left:1280px;top:95px" width="100" height="60" viewBox="1280 95 100 60"><path d="M1290 100.9L1356 135" stroke="#f00" stroke-width="4.2"/><path d="M1374.5 147.3L1345.6 142.4L1355.8 126.8Z" fill="#f00"/></svg>
<div class="a" style="left:465px;top:217px;width:1029px;height:639px;background:#fff"></div>
<div class="a" style="left:465px;top:267px;width:1029px;height:1px;background:#e9ecee"></div>
<div class="a" style="left:465px;top:331px;width:1029px;height:1px;background:#e9ecee"></div>
<div class="a" style="left:465px;top:418px;width:1029px;height:1px;background:#e9ecee"></div>
<div class="a" style="left:465px;top:469px;width:1029px;height:1px;background:#e9ecee"></div>
<div class="a" style="left:465px;top:520px;width:1029px;height:1px;background:#e9ecee"></div>
<div class="a" style="left:465px;top:571px;width:1029px;height:1px;background:#e9ecee"></div>
<div class="a" style="left:465px;top:622px;width:1029px;height:1px;background:#e9ecee"></div>
<div class="a" style="left:465px;top:674px;width:1029px;height:1px;background:#e9ecee"></div>
<div class="a" style="left:481px;top:235.3px;width:14.7px;height:13.8px;border:1.3px solid #6d6f72;border-radius:2.5px;background:#fff"></div>
<svg style="left:510.8px;top:234px" width="15" height="15" viewBox="0 0 16 16"><g fill="#a6acb3"><circle cx="8" cy="8" r="5.6"/><g><rect x="6.4" y="0.9" width="3.2" height="3" rx=".7"/><rect x="6.4" y="12.1" width="3.2" height="3" rx=".7"/></g><g transform="rotate(45 8 8)"><rect x="6.4" y="0.9" width="3.2" height="3" rx=".7"/><rect x="6.4" y="12.1" width="3.2" height="3" rx=".7"/></g><g transform="rotate(90 8 8)"><rect x="6.4" y="0.9" width="3.2" height="3" rx=".7"/><rect x="6.4" y="12.1" width="3.2" height="3" rx=".7"/></g><g transform="rotate(135 8 8)"><rect x="6.4" y="0.9" width="3.2" height="3" rx=".7"/><rect x="6.4" y="12.1" width="3.2" height="3" rx=".7"/></g></g><circle cx="8" cy="8" r="2.7" fill="#fff"/></svg>
<div class="t " style="left:542.1px;top:233.79px;font-size:15.25px;line-height:15.25px;color:#535c69;">ID</div>
<svg style="left:563.3px;top:239.6px" width="11" height="8" viewBox="0 0 11 8"><path d="M1.2 1.5L5.2 5.5L9.2 1.5" fill="none" stroke="#646c77" stroke-width="1.6"/></svg>
<div class="t " style="left:634.5px;top:233.79px;font-size:15.25px;line-height:15.25px;color:#535c69;">Активность</div>
<div class="t " style="left:789.5px;top:233.79px;font-size:15.25px;line-height:15.25px;color:#535c69;">Название</div>
<div class="t " style="left:966.5px;top:233.79px;font-size:15.25px;line-height:15.25px;color:#535c69;">Сортировка</div>
<div class="t " style="left:1124.5px;top:233.79px;font-size:15.25px;line-height:15.25px;color:#535c69;">На сервере</div>
<div class="t " style="left:1280.5px;top:233.79px;font-size:15.25px;line-height:15.25px;color:#535c69;">В браузере</div>
<div class="t " style="left:1434.8px;top:233.79px;font-size:15.25px;line-height:15.25px;color:#535c69;">Локальные базы</div>
<div class="a" style="left:481px;top:284.4px;width:14.7px;height:13.8px;border:1.3px solid #6d6f72;border-radius:2.5px;background:#fff"></div>
<div class="a" style="left:511.1px;top:288.09999999999997px;width:15.8px;height:2px;background:#c6cbd0"></div>
<div class="a" style="left:511.1px;top:292.45px;width:15.8px;height:2px;background:#c6cbd0"></div>
<div class="a" style="left:511.1px;top:296.79999999999995px;width:15.8px;height:2px;background:#c6cbd0"></div>
<div class="t " style="left:542.8px;top:285.29px;font-size:15.25px;line-height:15.25px;color:#535c69;">9</div>
<div class="a" style="left:634.3px;top:287.5px;width:11px;height:11px;background:#fab3b7;border-radius:50%"></div>
<div class="t " style="left:654.0999999999999px;top:285.29px;font-size:15.25px;line-height:15.25px;color:#535c69;">Нет</div>
<div class="t " style="left:789.5px;top:285.29px;font-size:15.25px;line-height:15.25px;color:#535c69;">Битрикс</div>
<div class="t " style="left:789.5px;top:303.29px;font-size:15.25px;line-height:15.25px;color:#535c69;">Геолокация</div>
<div class="t " style="left:966.5px;top:285.29px;font-size:15.25px;line-height:15.25px;color:#535c69;">500</div>
<div class="a" style="left:1124.3px;top:287.5px;width:11px;height:11px;background:#a8d23c;border-radius:50%"></div>
<div class="t " style="left:1144.1px;top:285.29px;font-size:15.25px;line-height:15.25px;color:#535c69;">Да</div>
<div class="a" style="left:1280px;top:287.5px;width:11px;height:11px;background:#fab3b7;border-radius:50%"></div>
<div class="t " style="left:1299.8px;top:285.29px;font-size:15.25px;line-height:15.25px;color:#535c69;">Нет</div>
<div class="a" style="left:1434.7px;top:287.5px;width:11px;height:11px;background:#fab3b7;border-radius:50%"></div>
<div class="t " style="left:1454.5px;top:285.29px;font-size:15.25px;line-height:15.25px;color:#535c69;">Нет</div>
<div class="a" style="left:481px;top:349.0px;width:14.7px;height:13.8px;border:1.3px solid #6d6f72;border-radius:2.5px;background:#fff"></div>
<div class="a" style="left:511.1px;top:352.7px;width:15.8px;height:2px;background:#c6cbd0"></div>
<div class="a" style="left:511.1px;top:357.05px;width:15.8px;height:2px;background:#c6cbd0"></div>
<div class="a" style="left:511.1px;top:361.4px;width:15.8px;height:2px;background:#c6cbd0"></div>
<div class="t " style="left:542.8px;top:349.89px;font-size:15.25px;line-height:15.25px;color:#535c69;">8</div>
<div class="a" style="left:634.3px;top:352.1px;width:11px;height:11px;background:#a8d23c;border-radius:50%"></div>
<div class="t " style="left:654.0999999999999px;top:349.89px;font-size:15.25px;line-height:15.25px;color:#535c69;">Да</div>
<div class="t " style="left:789.5px;top:349.89px;font-size:15.25px;line-height:15.25px;color:#535c69;">SypexGeo.net</div>
<div class="t " style="left:966.5px;top:349.89px;font-size:15.25px;line-height:15.25px;color:#535c69;">500</div>
<div class="a" style="left:1124.3px;top:352.1px;width:11px;height:11px;background:#a8d23c;border-radius:50%"></div>
<div class="t " style="left:1144.1px;top:349.89px;font-size:15.25px;line-height:15.25px;color:#535c69;">Да</div>
<div class="a" style="left:1280px;top:352.1px;width:11px;height:11px;background:#fab3b7;border-radius:50%"></div>
<div class="t " style="left:1299.8px;top:349.89px;font-size:15.25px;line-height:15.25px;color:#535c69;">Нет</div>
<div class="a" style="left:1434.7px;top:352.1px;width:11px;height:11px;background:#a8d23c;border-radius:50%"></div>
<div class="t " style="left:1454.5px;top:349.89px;font-size:15.25px;line-height:15.25px;color:#535c69;">Да</div>
<div class="t " style="left:1434.7px;top:377.00px;font-size:13px;line-height:13px;color:#535c69;">Обновлено</div>
<div class="t " style="left:1434.7px;top:392.10px;font-size:13px;line-height:13px;color:#535c69;">17:57:36</div>
<div class="a" style="left:481px;top:436.0px;width:14.7px;height:13.8px;border:1.3px solid #6d6f72;border-radius:2.5px;background:#fff"></div>
<div class="a" style="left:511.1px;top:439.7px;width:15.8px;height:2px;background:#c6cbd0"></div>
<div class="a" style="left:511.1px;top:444.05px;width:15.8px;height:2px;background:#c6cbd0"></div>
<div class="a" style="left:511.1px;top:448.4px;width:15.8px;height:2px;background:#c6cbd0"></div>
<div class="t " style="left:542.8px;top:436.89px;font-size:15.25px;line-height:15.25px;color:#535c69;">6</div>
<div class="a" style="left:634.3px;top:439.1px;width:11px;height:11px;background:#fab3b7;border-radius:50%"></div>
<div class="t " style="left:654.0999999999999px;top:436.89px;font-size:15.25px;line-height:15.25px;color:#535c69;">Нет</div>
<div class="t " style="left:789.5px;top:436.89px;font-size:15.25px;line-height:15.25px;color:#535c69;">ip-api.com</div>
<div class="t " style="left:966.5px;top:436.89px;font-size:15.25px;line-height:15.25px;color:#535c69;">500</div>
<div class="a" style="left:1124.3px;top:439.1px;width:11px;height:11px;background:#a8d23c;border-radius:50%"></div>
<div class="t " style="left:1144.1px;top:436.89px;font-size:15.25px;line-height:15.25px;color:#535c69;">Да</div>
<div class="a" style="left:1280px;top:439.1px;width:11px;height:11px;background:#fab3b7;border-radius:50%"></div>
<div class="t " style="left:1299.8px;top:436.89px;font-size:15.25px;line-height:15.25px;color:#535c69;">Нет</div>
<div class="a" style="left:1434.7px;top:439.1px;width:11px;height:11px;background:#fab3b7;border-radius:50%"></div>
<div class="t " style="left:1454.5px;top:436.89px;font-size:15.25px;line-height:15.25px;color:#535c69;">Нет</div>
<div class="a" style="left:481px;top:487.0px;width:14.7px;height:13.8px;border:1.3px solid #6d6f72;border-radius:2.5px;background:#fff"></div>
<div class="a" style="left:511.1px;top:490.7px;width:15.8px;height:2px;background:#c6cbd0"></div>
<div class="a" style="left:511.1px;top:495.05px;width:15.8px;height:2px;background:#c6cbd0"></div>
<div class="a" style="left:511.1px;top:499.4px;width:15.8px;height:2px;background:#c6cbd0"></div>
<div class="t " style="left:542.8px;top:487.89px;font-size:15.25px;line-height:15.25px;color:#535c69;">5</div>
<div class="a" style="left:634.3px;top:490.1px;width:11px;height:11px;background:#fab3b7;border-radius:50%"></div>
<div class="t " style="left:654.0999999999999px;top:487.89px;font-size:15.25px;line-height:15.25px;color:#535c69;">Нет</div>
<div class="t " style="left:789.5px;top:487.89px;font-size:15.25px;line-height:15.25px;color:#535c69;">Ip2RusCity.com</div>
<div class="t " style="left:966.5px;top:487.89px;font-size:15.25px;line-height:15.25px;color:#535c69;">500</div>
<div class="a" style="left:1124.3px;top:490.1px;width:11px;height:11px;background:#a8d23c;border-radius:50%"></div>
<div class="t " style="left:1144.1px;top:487.89px;font-size:15.25px;line-height:15.25px;color:#535c69;">Да</div>
<div class="a" style="left:1280px;top:490.1px;width:11px;height:11px;background:#fab3b7;border-radius:50%"></div>
<div class="t " style="left:1299.8px;top:487.89px;font-size:15.25px;line-height:15.25px;color:#535c69;">Нет</div>
<div class="a" style="left:1434.7px;top:490.1px;width:11px;height:11px;background:#fab3b7;border-radius:50%"></div>
<div class="t " style="left:1454.5px;top:487.89px;font-size:15.25px;line-height:15.25px;color:#535c69;">Нет</div>
<div class="a" style="left:481px;top:537.9999999999999px;width:14.7px;height:13.8px;border:1.3px solid #6d6f72;border-radius:2.5px;background:#fff"></div>
<div class="a" style="left:511.1px;top:541.6999999999999px;width:15.8px;height:2px;background:#c6cbd0"></div>
<div class="a" style="left:511.1px;top:546.05px;width:15.8px;height:2px;background:#c6cbd0"></div>
<div class="a" style="left:511.1px;top:550.4px;width:15.8px;height:2px;background:#c6cbd0"></div>
<div class="t " style="left:542.8px;top:538.89px;font-size:15.25px;line-height:15.25px;color:#535c69;">4</div>
<div class="a" style="left:634.3px;top:541.0999999999999px;width:11px;height:11px;background:#fab3b7;border-radius:50%"></div>
<div class="t " style="left:654.0999999999999px;top:538.89px;font-size:15.25px;line-height:15.25px;color:#535c69;">Нет</div>
<div class="t " style="left:789.5px;top:538.89px;font-size:15.25px;line-height:15.25px;color:#535c69;">Ip2GeoLocation.com</div>
<div class="t " style="left:966.5px;top:538.89px;font-size:15.25px;line-height:15.25px;color:#535c69;">420</div>
<div class="a" style="left:1124.3px;top:541.0999999999999px;width:11px;height:11px;background:#a8d23c;border-radius:50%"></div>
<div class="t " style="left:1144.1px;top:538.89px;font-size:15.25px;line-height:15.25px;color:#535c69;">Да</div>
<div class="a" style="left:1280px;top:541.0999999999999px;width:11px;height:11px;background:#fab3b7;border-radius:50%"></div>
<div class="t " style="left:1299.8px;top:538.89px;font-size:15.25px;line-height:15.25px;color:#535c69;">Нет</div>
<div class="a" style="left:1434.7px;top:541.0999999999999px;width:11px;height:11px;background:#fab3b7;border-radius:50%"></div>
<div class="t " style="left:1454.5px;top:538.89px;font-size:15.25px;line-height:15.25px;color:#535c69;">Нет</div>
<div class="a" style="left:481px;top:588.9999999999999px;width:14.7px;height:13.8px;border:1.3px solid #6d6f72;border-radius:2.5px;background:#fff"></div>
<div class="a" style="left:511.1px;top:592.6999999999999px;width:15.8px;height:2px;background:#c6cbd0"></div>
<div class="a" style="left:511.1px;top:597.05px;width:15.8px;height:2px;background:#c6cbd0"></div>
<div class="a" style="left:511.1px;top:601.4px;width:15.8px;height:2px;background:#c6cbd0"></div>
<div class="t " style="left:542.8px;top:589.89px;font-size:15.25px;line-height:15.25px;color:#535c69;">3</div>
<div class="a" style="left:634.3px;top:592.0999999999999px;width:11px;height:11px;background:#fab3b7;border-radius:50%"></div>
<div class="t " style="left:654.0999999999999px;top:589.89px;font-size:15.25px;line-height:15.25px;color:#535c69;">Нет</div>
<div class="t " style="left:789.5px;top:589.89px;font-size:15.25px;line-height:15.25px;color:#535c69;">GeoPlugin.com</div>
<div class="t " style="left:966.5px;top:589.89px;font-size:15.25px;line-height:15.25px;color:#535c69;">410</div>
<div class="a" style="left:1124.3px;top:592.0999999999999px;width:11px;height:11px;background:#a8d23c;border-radius:50%"></div>
<div class="t " style="left:1144.1px;top:589.89px;font-size:15.25px;line-height:15.25px;color:#535c69;">Да</div>
<div class="a" style="left:1280px;top:592.0999999999999px;width:11px;height:11px;background:#fab3b7;border-radius:50%"></div>
<div class="t " style="left:1299.8px;top:589.89px;font-size:15.25px;line-height:15.25px;color:#535c69;">Нет</div>
<div class="a" style="left:1434.7px;top:592.0999999999999px;width:11px;height:11px;background:#fab3b7;border-radius:50%"></div>
<div class="t " style="left:1454.5px;top:589.89px;font-size:15.25px;line-height:15.25px;color:#535c69;">Нет</div>
<div class="a" style="left:481px;top:639.9999999999999px;width:14.7px;height:13.8px;border:1.3px solid #6d6f72;border-radius:2.5px;background:#fff"></div>
<div class="a" style="left:511.1px;top:643.6999999999999px;width:15.8px;height:2px;background:#c6cbd0"></div>
<div class="a" style="left:511.1px;top:648.05px;width:15.8px;height:2px;background:#c6cbd0"></div>
<div class="a" style="left:511.1px;top:652.4px;width:15.8px;height:2px;background:#c6cbd0"></div>
<div class="t " style="left:542.8px;top:640.89px;font-size:15.25px;line-height:15.25px;color:#535c69;">2</div>
<div class="a" style="left:634.3px;top:643.0999999999999px;width:11px;height:11px;background:#a8d23c;border-radius:50%"></div>
<div class="t " style="left:654.0999999999999px;top:640.89px;font-size:15.25px;line-height:15.25px;color:#535c69;">Да</div>
<div class="t " style="left:789.5px;top:640.89px;font-size:15.25px;line-height:15.25px;color:#535c69;">Яндекс</div>
<div class="t " style="left:966.5px;top:640.89px;font-size:15.25px;line-height:15.25px;color:#535c69;">300</div>
<div class="a" style="left:1124.3px;top:643.0999999999999px;width:11px;height:11px;background:#fab3b7;border-radius:50%"></div>
<div class="t " style="left:1144.1px;top:640.89px;font-size:15.25px;line-height:15.25px;color:#535c69;">Нет</div>
<div class="a" style="left:1280px;top:643.0999999999999px;width:11px;height:11px;background:#a8d23c;border-radius:50%"></div>
<div class="t " style="left:1299.8px;top:640.89px;font-size:15.25px;line-height:15.25px;color:#535c69;">Да</div>
<div class="a" style="left:1434.7px;top:643.0999999999999px;width:11px;height:11px;background:#fab3b7;border-radius:50%"></div>
<div class="t " style="left:1454.5px;top:640.89px;font-size:15.25px;line-height:15.25px;color:#535c69;">Нет</div>
<div class="a" style="left:481px;top:691.4px;width:14.7px;height:13.8px;border:1.3px solid #6d6f72;border-radius:2.5px;background:#fff"></div>
<div class="a" style="left:511.1px;top:695.1px;width:15.8px;height:2px;background:#c6cbd0"></div>
<div class="a" style="left:511.1px;top:699.45px;width:15.8px;height:2px;background:#c6cbd0"></div>
<div class="a" style="left:511.1px;top:703.8000000000001px;width:15.8px;height:2px;background:#c6cbd0"></div>
<div class="t " style="left:542.8px;top:692.29px;font-size:15.25px;line-height:15.25px;color:#535c69;">1</div>
<div class="a" style="left:634.3px;top:694.5px;width:11px;height:11px;background:#a8d23c;border-radius:50%"></div>
<div class="t " style="left:654.0999999999999px;top:692.29px;font-size:15.25px;line-height:15.25px;color:#535c69;">Да</div>
<div class="t " style="left:789.5px;top:692.29px;font-size:15.25px;line-height:15.25px;color:#535c69;">Dadata.ru</div>
<div class="t " style="left:966.5px;top:692.29px;font-size:15.25px;line-height:15.25px;color:#535c69;">400</div>
<div class="a" style="left:1124.3px;top:694.5px;width:11px;height:11px;background:#fab3b7;border-radius:50%"></div>
<div class="t " style="left:1144.1px;top:692.29px;font-size:15.25px;line-height:15.25px;color:#535c69;">Нет</div>
<div class="a" style="left:1280px;top:694.5px;width:11px;height:11px;background:#a8d23c;border-radius:50%"></div>
<div class="t " style="left:1299.8px;top:692.29px;font-size:15.25px;line-height:15.25px;color:#535c69;">Да</div>
<div class="a" style="left:1434.7px;top:694.5px;width:11px;height:11px;background:#fab3b7;border-radius:50%"></div>
<div class="t " style="left:1454.5px;top:692.29px;font-size:15.25px;line-height:15.25px;color:#535c69;">Нет</div>
<div class="a" style="left:1484px;top:217px;width:10px;height:507.6px;background:linear-gradient(90deg,rgba(0,0,0,0),rgba(0,0,0,.075))"></div>
<div class="a" style="left:1494px;top:217px;width:17px;height:639px;background:#e3eaec"></div>
<div class="a" style="left:1440px;top:443.6px;width:54px;height:105.4px;overflow:hidden"><div class="a" style="left:0;top:0;width:105.4px;height:105.4px;border-radius:50%;background:rgba(83,92,105,.2)"></div></div>
<svg style="left:1463px;top:480px" width="22" height="34" viewBox="0 0 22 34"><path d="M4 3L15.5 16.8L4 30.6" fill="none" stroke="#fff" stroke-opacity=".85" stroke-width="4.2"/></svg>
<div class="a" style="left:465px;top:724.8px;width:1029px;height:15.2px;background:#f1f1f1"></div>
<div class="a" style="left:465px;top:740px;width:1029px;height:1.8px;background:#edf1f3"></div>
<div class="a" style="left:479.9px;top:726.8px;width:903px;height:10.8px;background:#bebebe"></div>
<svg style="left:469px;top:728px" width="6" height="9" viewBox="0 0 6 9"><path d="M5 0.5V8.5L0.8 4.5Z" fill="#8f8f8f"/></svg>
<svg style="left:1484px;top:728px" width="6" height="9" viewBox="0 0 6 9"><path d="M0.5 0.5V8.5L4.8 4.5Z" fill="#505050"/></svg>
<div class="t " style="left:486.5px;top:761.10px;font-size:13px;line-height:13px;color:#535c69;transform:scaleX(0.9038);transform-origin:0 0;-webkit-text-stroke:0.35px #535c69;">ОТМЕЧЕНО:</div>
<div class="t " style="left:560.3px;top:761.10px;font-size:13px;line-height:13px;color:#111;transform:scaleX(0.9684);transform-origin:0 0;-webkit-text-stroke:0.5px #111;">0 / 8</div>
<div class="t " style="left:647.6px;top:761.10px;font-size:13px;line-height:13px;color:#535c69;transform:scaleX(0.8726);transform-origin:0 0;-webkit-text-stroke:0.35px #535c69;">ВСЕГО:</div>
<div class="t " style="left:691.3px;top:761.10px;font-size:13px;line-height:13px;color:#2067b0;transform:scaleX(0.9340);transform-origin:0 0;text-decoration:underline;text-underline-offset:2px;-webkit-text-stroke:0.3px #2067b0;">ПОКАЗАТЬ КОЛИЧЕСТВО</div>
<div class="t " style="left:880.9px;top:761.10px;font-size:13px;line-height:13px;color:#535c69;transform:scaleX(0.9062);transform-origin:0 0;-webkit-text-stroke:0.35px #535c69;">СТРАНИЦЫ:</div>
<div class="t " style="left:959.3px;top:761.52px;font-size:12.5px;line-height:12.5px;color:#222;-webkit-text-stroke:0.5px #222;">1</div>
<svg style="left:999px;top:760px" width="9" height="14" viewBox="0 0 9 14"><path d="M7 1.5L2 7L7 12.5" fill="none" stroke="#535c69" stroke-width="1.8"/></svg>
<div class="t " style="left:1013.9px;top:761.10px;font-size:13px;line-height:13px;color:#535c69;transform:scaleX(0.9153);transform-origin:0 0;-webkit-text-stroke:0.35px #535c69;">ПРЕДЫДУЩАЯ</div>
<div class="t " style="left:1126.4px;top:761.10px;font-size:13px;line-height:13px;color:#535c69;transform:scaleX(0.9286);transform-origin:0 0;-webkit-text-stroke:0.35px #535c69;">СЛЕДУЮЩАЯ</div>
<svg style="left:1212.5px;top:760px" width="9" height="14" viewBox="0 0 9 14"><path d="M2 1.5L7 7L2 12.5" fill="none" stroke="#535c69" stroke-width="1.8"/></svg>
<div class="t " style="left:1312px;top:761.10px;font-size:13px;line-height:13px;color:#535c69;transform:scaleX(0.9122);transform-origin:0 0;-webkit-text-stroke:0.35px #535c69;">НА СТРАНИЦЕ:</div>
<div class="a" style="left:1402px;top:748.4px;width:78px;height:37.2px;border:1px solid #d5d9dd;border-radius:4px;background:#fff"></div>
<div class="t " style="left:1419.7px;top:761.52px;font-size:12.5px;line-height:12.5px;color:#535c69;letter-spacing:0.3px;-webkit-text-stroke:0.35px #535c69;">20</div>
<svg style="left:1451px;top:763px" width="14" height="9" viewBox="0 0 14 9"><path d="M1.5 1.5L7 6.8L12.5 1.5" fill="none" stroke="#535c69" stroke-width="2"/></svg>
<div class="a" style="left:465px;top:792px;width:1029px;height:2px;background:#eef2f4"></div>
<svg style="left:486px;top:818.5px" width="13" height="13" viewBox="0 0 13 13"><path d="M1.5 1.5L11.5 11.5M11.5 1.5L1.5 11.5" stroke="#b7bcc2" stroke-width="2.6"/></svg>
<div class="t " style="left:505.7px;top:819.60px;font-size:13px;line-height:13px;color:#b4b9bf;letter-spacing:0.1px;-webkit-text-stroke:0.3px #b4b9bf;">УДАЛИТЬ</div>
<div class="a" style="left:587.4px;top:807.7px;width:148px;height:35.4px;border:1px solid #dfe2e6;border-radius:4px;background:#fff"></div>
<div class="t " style="left:604.6px;top:819.96px;font-size:12.8px;line-height:12.8px;color:#acb1b8;-webkit-text-stroke:0.3px #acb1b8;">- ДЕЙСТВИЯ -</div>
<svg style="left:707.5px;top:820.5px" width="14" height="9" viewBox="0 0 14 9"><path d="M1.5 1.5L7 6.8L12.5 1.5" fill="none" stroke="#8e959c" stroke-width="2"/></svg>
</body></html>
